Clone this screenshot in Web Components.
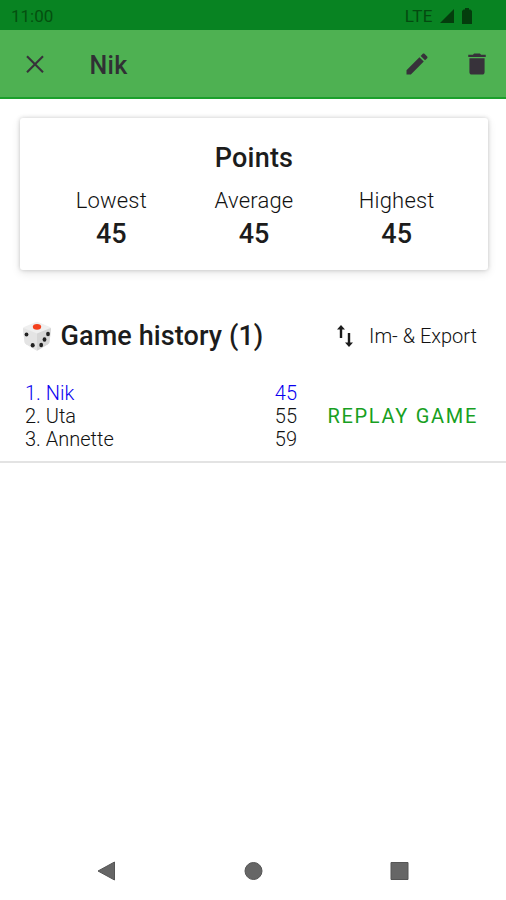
<!DOCTYPE html>
<html lang="en">
<head>
<meta charset="utf-8">
<title>Nik</title>
<style>
  body {
    margin: 0;
    width: 506px;
    height: 900px;
    overflow: hidden;
    display: flex;
    flex-direction: column;
    background: #fff;
    color: #1c1c1c;
    font-family: Roboto, "Liberation Sans", sans-serif; }
  nav-bar {
    margin-top: auto; }
</style>
</head>
<body>
  <status-bar>11:00</status-bar>
  <app-toolbar>Nik</app-toolbar>
  <points-card heading="Points">
    <point-stat label="Lowest">45</point-stat>
    <point-stat label="Average">45</point-stat>
    <point-stat label="Highest">45</point-stat>
  </points-card>
  <history-header action="Im- &amp; Export">Game history (1)</history-header>
  <game-entry action="REPLAY GAME">
    <player-row points="45" active>1. Nik</player-row>
    <player-row points="55">2. Uta</player-row>
    <player-row points="59">3. Annette</player-row>
  </game-entry>
  <nav-bar></nav-bar>

<script>
function define(name, html){
  var template = document.createElement('template');
  template.innerHTML = html;

  customElements.define(name, class extends HTMLElement {
    constructor(){
      super();
      this.attachShadow({mode: 'open'});
      this.shadowRoot.appendChild(template.content.cloneNode(true));
    }
    connectedCallback(){
      // copy attributes into the elements that show them
      this.shadowRoot.querySelectorAll('[data-attr]').forEach(el => {
        el.textContent = this.getAttribute(el.dataset.attr);
      });
    }
  });
}

define('status-bar', `
<style>
  :host {
    display: flex;
    align-items: center;
    box-sizing: border-box;
    height: 30px;
    padding: 1px 34px 0 11px;
    background: #088322;
    color: #04500f;
    font-size: 17px; }
  .network {
    margin-left: auto;
    color: #044a10;
    letter-spacing: 0.5px; }
  svg {
    display: block;
    fill: #043d0d; }
  .signal { margin-left: 6px; }
  .battery { margin-left: 8px; }
</style>
<slot></slot>
<span class="network">LTE</span>
<svg class="signal" width="15" height="15" viewBox="0 0 15 15"><path d="M15 1v14H1z"/></svg>
<svg class="battery" width="10" height="16" viewBox="0 0 10 16"><path d="M3 0h4v1.600h1.500L10 3v13H0V3l1.500-1.400H3z"/></svg>
`);

define('app-toolbar', `
<style>
  :host {
    display: flex;
    align-items: center;
    box-sizing: border-box;
    height: 69px;
    padding: 0 15px 0 20px;
    background: #4eb152;
    border-bottom: 2px solid #1b9f2b;
    color: #303034;
    font-size: 25px;
    font-weight: 500; }
  svg {
    display: block;
    width: 28px;
    height: 28px;
    fill: #37323a; }
  .close {
    width: 30px;
    height: 30px; }
  .title {
    flex: 1;
    padding: 3px 0 0 39.500px;
    letter-spacing: 0.3px; }
  .edit { margin-right: 32px; }
</style>
<svg class="close" viewBox="0 0 24 24"><path d="M19 6.410L17.800 5.200 12 11 6.200 5.200 5 6.410 10.800 12.200 5 18l1.200 1.200L12 13.400l5.800 5.800L19 18l-5.800-5.800z"/></svg>
<span class="title"><slot></slot></span>
<svg class="edit" viewBox="0 0 24 24"><path d="M3 17.250V21h3.750L17.810 9.940l-3.750-3.750L3 17.250zM20.710 7.040c.39-.39.39-1.020 0-1.410l-2.340-2.340c-.39-.39-1.020-.39-1.410 0l-1.830 1.830 3.750 3.750 1.830-1.830z"/></svg>
<svg viewBox="0 0 24 24"><path d="M5.500 19c0 1.100.9 2 2 2h9c1.100 0 2-.9 2-2V7h-13v12zM19.500 4h-4l-1-1h-5l-1 1h-4v2h15V4z"/></svg>
`);

define('points-card', `
<style>
  :host {
    display: block;
    box-sizing: border-box;
    height: 152px;
    margin: 19px 18px 0 20px;
    padding-top: 25px;
    border-radius: 3px;
    background: #fff;
    box-shadow: 0 0 4px rgba(0, 0, 0, 0.18), 0 3px 10px rgba(0, 0, 0, 0.1); }
  .heading {
    text-align: center;
    font-size: 27px;
    font-weight: 500;
    line-height: 31px;
    letter-spacing: 0.2px; }
  .stats {
    display: flex;
    margin-top: 11px;
    padding: 0 20px; }
  ::slotted(*) { flex: 1; }
</style>
<div class="heading" data-attr="heading"></div>
<div class="stats"><slot></slot></div>
`);

define('point-stat', `
<style>
  :host {
    display: block;
    text-align: center; }
  .label {
    font-size: 22px;
    font-weight: 300;
    line-height: 32px;
    letter-spacing: 0.2px;
    color: #111; }
  .value {
    font-size: 27px;
    font-weight: 500;
    line-height: 35px; }
</style>
<div class="label" data-attr="label"></div>
<div class="value"><slot></slot></div>
`);

define('history-header', `
<style>
  :host {
    display: flex;
    align-items: center;
    height: 40px;
    margin: 46px 29px 0 22px; }
  .title {
    margin-left: 8.500px;
    font-size: 27px;
    font-weight: 500;
    letter-spacing: 0.1px; }
  .sort { margin-left: auto; }
  .action {
    margin-left: 16px;
    font-size: 20px;
    font-weight: 300;
    color: #111; }
</style>
<svg width="30" height="31" viewBox="0 0 30 31">
  <path fill="#efefef" d="M14 1q1-.5 2 0l12 5q1.200.5 1 2l-1.500 13q-.2 1.500-1.500 2.300l-10 6q-1 .6-2 0l-10-6q-1.300-.8-1.500-2.300L1 8q-.2-1.500 1-2z"/>
  <path fill="#d6d6d6" d="M15 12.500l13.500-5.500q.6.500.5 1.500l-1.500 12.500q-.2 1.500-1.500 2.300l-10 6q-.5.300-1 .3z"/>
  <path fill="#e4e4e4" d="M1.500 7L15 12.500v17.100q-.5 0-1-.3l-10-6q-1.300-.8-1.500-2.300L1 8.500q0-1 .5-1.500z"/>
  <ellipse cx="15" cy="5.800" rx="4.200" ry="2.900" fill="#f4401c"/>
  <g fill="#222">
    <ellipse cx="4.500" cy="13.500" rx="1.900" ry="2.100"/>
    <ellipse cx="10.700" cy="24.300" rx="2" ry="2.200"/>
    <ellipse cx="26" cy="13" rx="1.900" ry="2.200"/>
    <ellipse cx="22.500" cy="18.500" rx="1.900" ry="2.200"/>
    <ellipse cx="19.200" cy="24" rx="1.900" ry="2.200"/>
  </g>
</svg>
<span class="title"><slot></slot></span>
<svg class="sort" width="16" height="22" viewBox="0 0 16 22"><path fill="#1c1c1c" d="M4 0l4 4.600H5.200V13H2.800V4.600H0zM12 22l-4-4.600h2.800V8h2.400v9.400H16z"/></svg>
<span class="action" data-attr="action"></span>
`);

define('game-entry', `
<style>
  :host {
    display: flex;
    align-items: center;
    box-sizing: border-box;
    height: 107px;
    padding: 21px 28px 6px 25px;
    border-bottom: 2px solid #e3e3e3; }
  .players { width: 272px; }
  .action {
    margin-left: auto;
    padding-bottom: 1px;
    font-size: 20px;
    letter-spacing: 1.700px;
    color: #17a022; }
</style>
<div class="players"><slot></slot></div>
<span class="action" data-attr="action"></span>
`);

define('player-row', `
<style>
  :host {
    display: flex;
    justify-content: space-between;
    font-size: 20px;
    font-weight: 300;
    line-height: 23px;
    color: #111; }
  :host([active]) { color: #0a00f0; }
</style>
<span><slot></slot></span>
<span data-attr="points"></span>
`);

define('nav-bar', `
<style>
  :host {
    display: flex;
    align-items: center;
    justify-content: space-between;
    height: 58px;
    padding: 0 97px; }
  svg {
    display: block;
    fill: #666;
    stroke: #555; }
</style>
<svg width="19" height="20" viewBox="0 0 19 20"><path d="M17.500 1v18L1 10z"/></svg>
<svg width="19" height="20" viewBox="0 0 19 20"><circle cx="9.500" cy="10" r="8.500"/></svg>
<svg width="19" height="20" viewBox="0 0 19 20"><path d="M1 1.500h17v17H1z"/></svg>
`);
</script>
</body>
</html>
